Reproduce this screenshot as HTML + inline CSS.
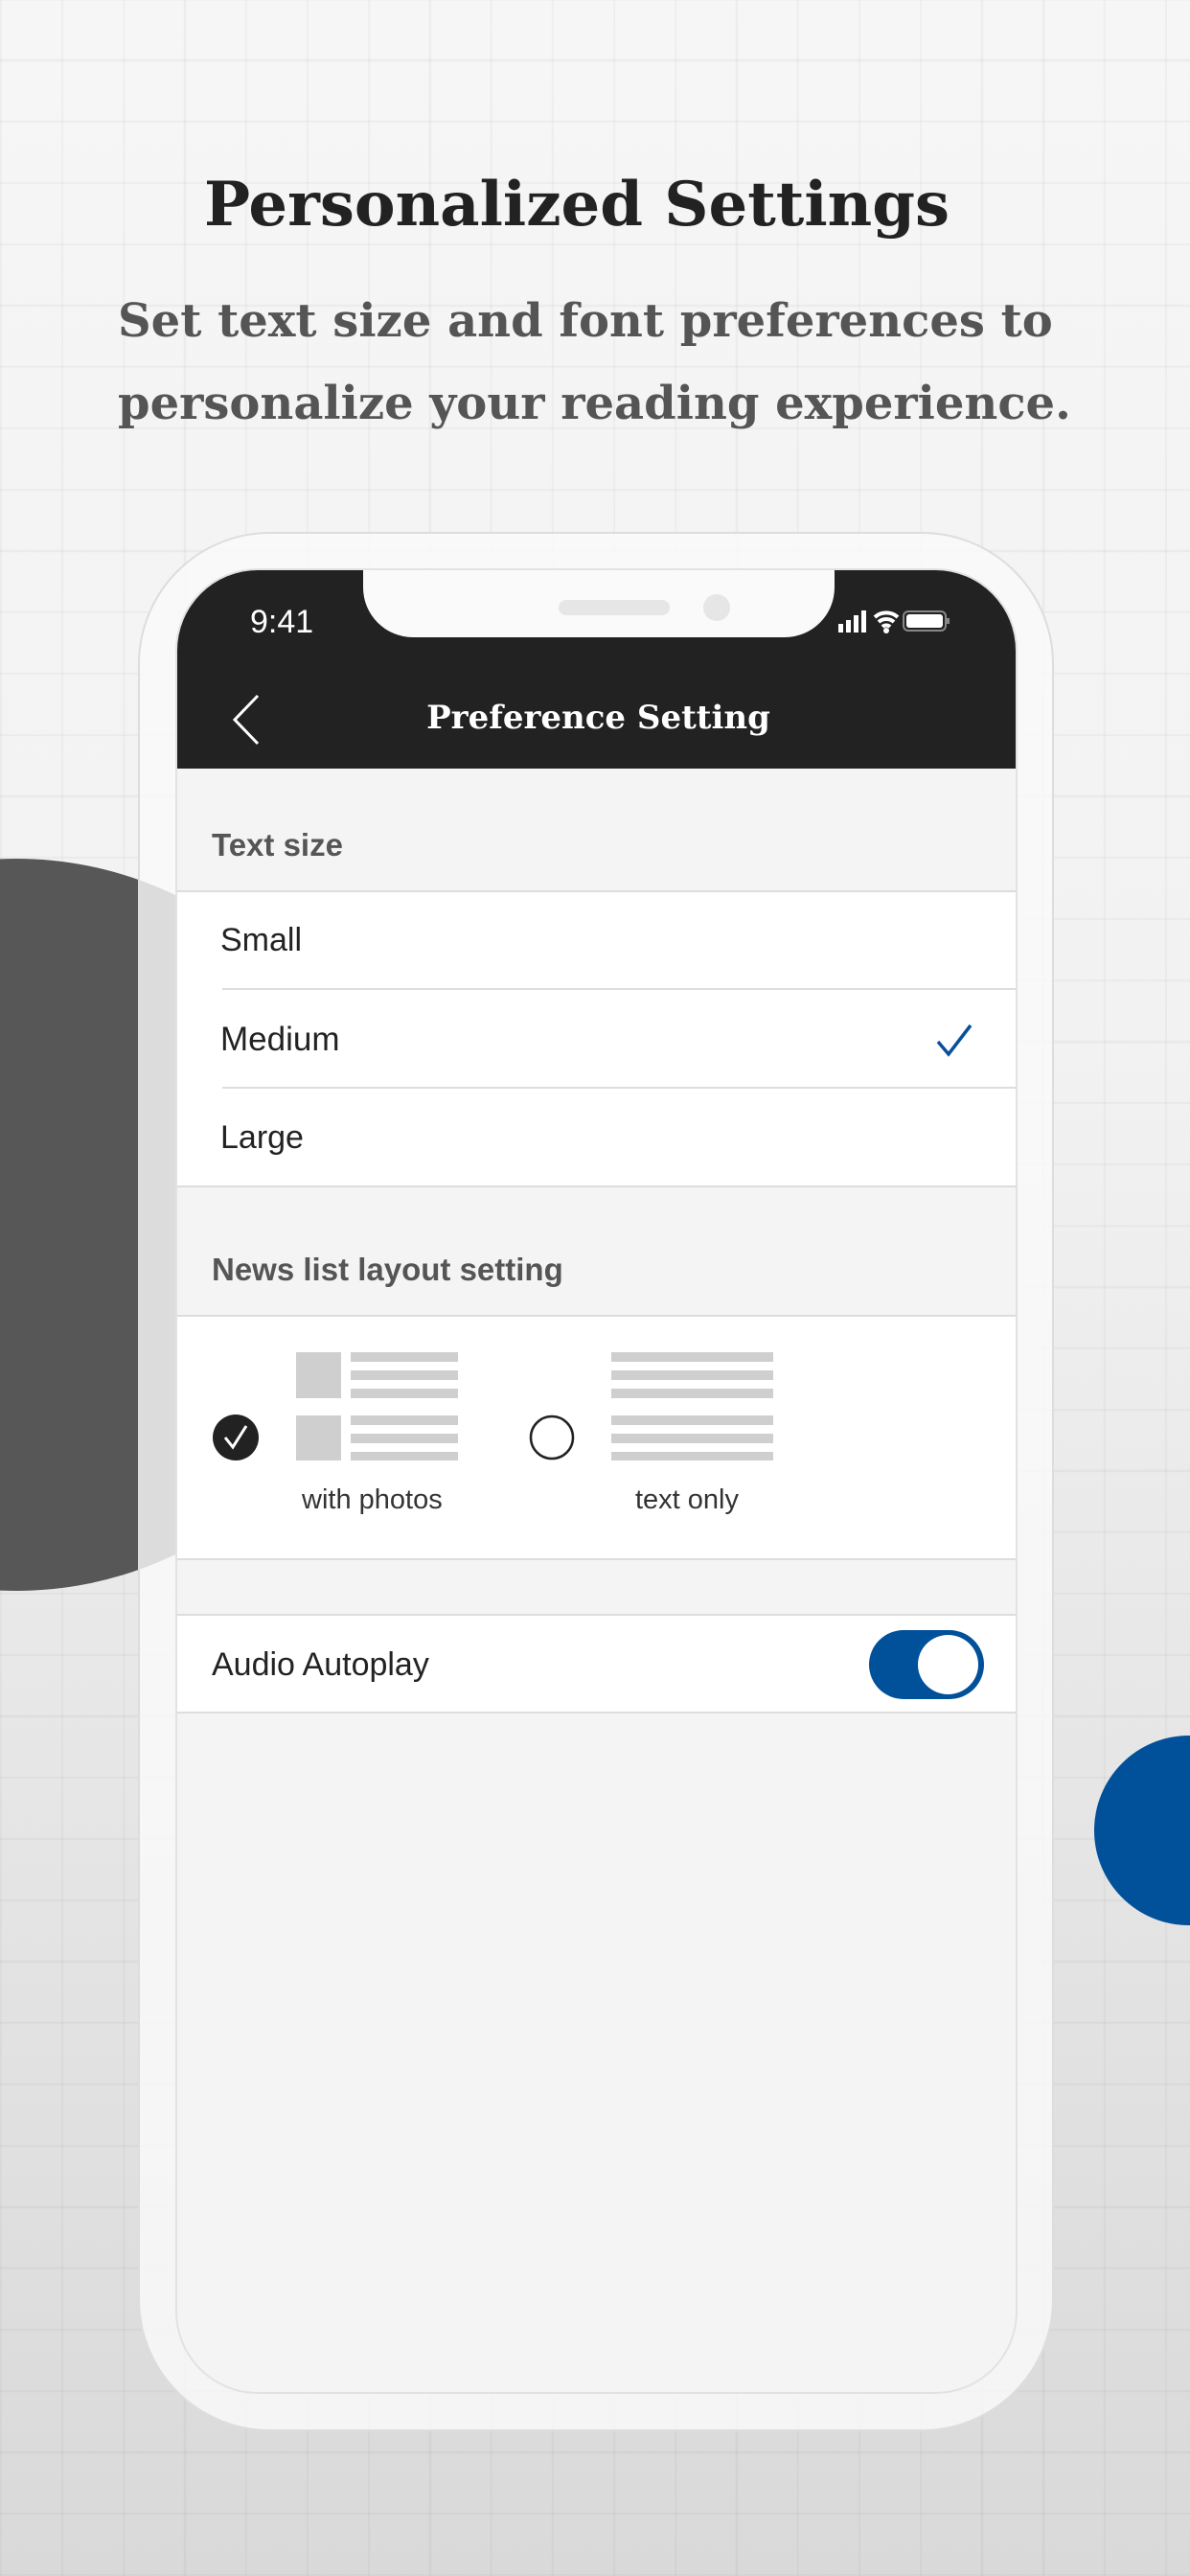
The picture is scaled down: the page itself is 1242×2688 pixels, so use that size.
<!DOCTYPE html>
<html><head><meta charset="utf-8"><style>
*{margin:0;padding:0;box-sizing:border-box}
body{width:1242px;height:2688px;position:relative;overflow:hidden;font-family:"Liberation Sans",sans-serif;
background:
repeating-linear-gradient(90deg,rgba(0,0,0,0.035) 0 2px,transparent 2px 64px),
repeating-linear-gradient(0deg,rgba(0,0,0,0.035) 0 2px,transparent 2px 64px),
linear-gradient(#f6f6f6 0%,#f2f2f2 40%,#d9d9d9 100%);}
.abs{position:absolute}
h1{position:absolute;left:0;width:1204px;top:176px;text-align:center;font:bold 64px "DejaVu Serif",serif;color:#222}
.sub{position:absolute;left:123px;top:292px;font:bold 48px/86px "DejaVu Serif",serif;color:#555;white-space:nowrap}
.t{position:absolute;white-space:nowrap}
</style></head><body>
<h1>Personalized Settings</h1>
<div class="sub">Set text size and font preferences to<br>personalize your reading experience.</div>

<div class="abs" style="left:-365px;top:896px;width:764px;height:764px;border-radius:50%;background:#575757"></div>
<div class="abs" style="left:1142px;top:1811px;width:198px;height:198px;border-radius:50%;background:#00509a"></div>

<div class="abs" style="left:144px;top:555px;width:956px;height:1982px;border-radius:138px;background:rgba(250,250,250,0.82);border:2px solid #ddd"></div>
<div class="abs" style="left:183px;top:593px;width:879px;height:1905px;border-radius:86px;background:#f4f4f4;border:2px solid #e2e2e2;overflow:hidden">
  <div class="abs" style="left:0;top:0;width:879px;height:207px;background:#222"></div>
  <div class="abs" style="left:194px;top:-10px;width:492px;height:80px;background:#fafafa;border-radius:0 0 52px 52px"></div>
  <div class="abs" style="left:398px;top:31px;width:116px;height:16px;border-radius:8px;background:#e6e6e6"></div>
  <div class="abs" style="left:549px;top:25px;width:28px;height:28px;border-radius:50%;background:#e6e6e6"></div>
  <div class="t" style="left:76px;top:35px;font-size:34px;color:#fff">9:41</div>
  <svg class="abs" style="left:690px;top:38px" width="140" height="30" viewBox="0 0 140 30">
    <rect x="0" y="18" width="5" height="9" fill="#fff"/><rect x="8" y="14" width="5" height="13" fill="#fff"/><rect x="16" y="9" width="5" height="18" fill="#fff"/><rect x="24" y="4" width="5" height="23" fill="#fff"/>
    <path d="M38 11a18 18 0 0 1 24 0M42 16a12 12 0 0 1 16 0M46 21a6 6 0 0 1 8 0" stroke="#fff" stroke-width="4" fill="none"/><circle cx="50" cy="25" r="3" fill="#fff"/>
    <rect x="68" y="5" width="44" height="20" rx="5" fill="none" stroke="#888" stroke-width="2"/><rect x="71" y="8" width="38" height="14" rx="3" fill="#fff"/><rect x="113" y="12" width="3" height="6" fill="#888"/>
  </svg>
  <svg class="abs" style="left:56px;top:129px" width="32" height="54"><path d="M28 2 L4 27 L28 52" stroke="#fff" stroke-width="3" fill="none"/></svg>
  <div class="t" style="left:0;width:879px;text-align:center;top:134px;font:bold 34px 'DejaVu Serif',serif;color:#fff">Preference Setting</div>

  <div class="t" style="left:36px;top:268px;font-weight:bold;font-size:33px;color:#555">Text size</div>
  <div class="abs" style="left:0;top:334px;width:879px;height:310px;background:#fff;border-top:2px solid #ddd;border-bottom:2px solid #ddd"></div>
  <div class="abs" style="left:47px;top:436px;width:832px;height:2px;background:#ddd"></div>
  <div class="abs" style="left:47px;top:539px;width:832px;height:2px;background:#ddd"></div>
  <div class="t" style="left:45px;top:367px;font-size:34px;color:#222">Small</div>
  <div class="t" style="left:45px;top:470px;font-size:35px;color:#222">Medium</div>
  <div class="t" style="left:45px;top:573px;font-size:34px;color:#222">Large</div>
  <svg class="abs" style="left:791px;top:472px" width="40" height="40"><path d="M3 20 L14 33 L37 3" stroke="#0a4f9c" stroke-width="3.5" fill="none"/></svg>

  <div class="t" style="left:36px;top:711px;font-weight:bold;font-size:33px;color:#555">News list layout setting</div>
  <div class="abs" style="left:0;top:777px;width:879px;height:256px;background:#fff;border-top:2px solid #ddd;border-bottom:2px solid #ddd"></div>
  <svg class="abs" style="left:0;top:777px" width="879" height="256">
    <circle cx="61" cy="128" r="24" fill="#222"/><path d="M50 128 L58 138 L72 116" stroke="#fff" stroke-width="3" fill="none"/>
    <rect x="124" y="39" width="47" height="48" fill="#cfcfcf"/><rect x="124" y="105" width="47" height="47" fill="#cfcfcf"/>
    <g fill="#cfcfcf"><rect x="181" y="39" width="112" height="10"/><rect x="181" y="58" width="112" height="10"/><rect x="181" y="77" width="112" height="10"/><rect x="181" y="105" width="112" height="10"/><rect x="181" y="124" width="112" height="10"/><rect x="181" y="143" width="112" height="9"/>
    <rect x="453" y="39" width="169" height="10"/><rect x="453" y="58" width="169" height="10"/><rect x="453" y="77" width="169" height="10"/><rect x="453" y="105" width="169" height="10"/><rect x="453" y="124" width="169" height="10"/><rect x="453" y="143" width="169" height="9"/></g>
    <circle cx="391" cy="128" r="22" fill="none" stroke="#222" stroke-width="2.5"/>
  </svg>
  <div class="t" style="left:130px;top:954px;font-size:29px;color:#333">with photos</div>
  <div class="t" style="left:478px;top:954px;font-size:29px;color:#333">text only</div>

  <div class="abs" style="left:0;top:1089px;width:879px;height:104px;background:#fff;border-top:2px solid #ddd;border-bottom:2px solid #ddd"></div>
  <div class="t" style="left:36px;top:1123px;font-size:34px;color:#222">Audio Autoplay</div>
  <div class="abs" style="left:722px;top:1106px;width:120px;height:72px;border-radius:36px;background:#00509a"></div>
  <div class="abs" style="left:773px;top:1111px;width:63px;height:62px;border-radius:50%;background:#fff"></div>
</div>
</body></html>
